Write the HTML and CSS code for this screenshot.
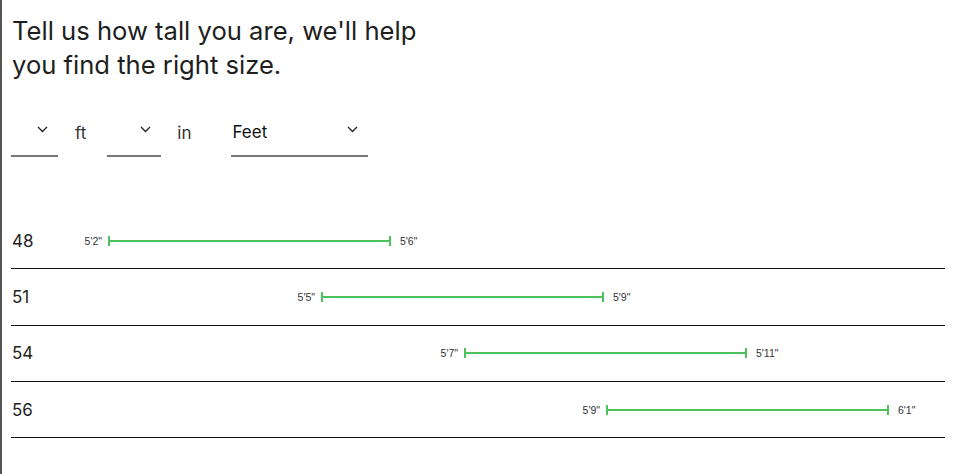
FILE: index.html
```html
<!DOCTYPE html>
<html lang="en">
<head>
    <meta charset="UTF-8">
    <meta name="viewport" content="width=device-width, initial-scale=1.0">
    <title>Size Finder</title>
    <link rel="stylesheet" href="styles.css">
</head>
<body>
    <div class="page">
        <h1 class="title">Tell us how tall you are, we'll help<br>you find the right size.</h1>

        <div class="height-picker">
            <div class="select select-ft">
                <span class="select-value"></span>
                <svg class="chevron" width="11" height="7" viewBox="0 0 11 7"><path d="M1 1l4.5 4.5L10 1" fill="none" stroke="#222" stroke-width="1.3"/></svg>
            </div>
            <span class="unit unit-ft">ft</span>
            <div class="select select-in">
                <span class="select-value"></span>
                <svg class="chevron" width="11" height="7" viewBox="0 0 11 7"><path d="M1 1l4.5 4.5L10 1" fill="none" stroke="#222" stroke-width="1.3"/></svg>
            </div>
            <span class="unit unit-in">in</span>
            <div class="select select-system">
                <span class="select-value">Feet</span>
                <svg class="chevron" width="11" height="7" viewBox="0 0 11 7"><path d="M1 1l4.5 4.5L10 1" fill="none" stroke="#222" stroke-width="1.3"/></svg>
            </div>
        </div>

        <div class="size-chart">
            <div class="size-row">
                <span class="size">48</span>
                <div class="range" style="margin-left: 0px;">
                    <span class="range-lo">5'2"</span>
                    <span class="range-bar"></span>
                    <span class="range-hi">5'6"</span>
                </div>
            </div>
            <div class="size-row">
                <span class="size">51</span>
                <div class="range" style="margin-left: 213px;">
                    <span class="range-lo">5'5"</span>
                    <span class="range-bar"></span>
                    <span class="range-hi">5'9"</span>
                </div>
            </div>
            <div class="size-row">
                <span class="size">54</span>
                <div class="range" style="margin-left: 356px;">
                    <span class="range-lo">5'7"</span>
                    <span class="range-bar"></span>
                    <span class="range-hi">5'11"</span>
                </div>
            </div>
            <div class="size-row">
                <span class="size">56</span>
                <div class="range" style="margin-left: 498px;">
                    <span class="range-lo">5'9"</span>
                    <span class="range-bar"></span>
                    <span class="range-hi">6'1"</span>
                </div>
            </div>
        </div>
    </div>
</body>
</html>
```

FILE: styles.css
```css
html, body {
    margin: 0;
    padding: 0;
    background-color: #fff;
}

body {
    font-family: Inter, "Liberation Sans", Arial, sans-serif;
    color: #222;
}

.page {
    min-height: 474px;
    box-sizing: border-box;
    border-left: 2px solid #555;
    padding: 14px 29px 0 9px;
}

.title {
    margin: 0 0 0 1px;
    font-size: 25.6px;
    font-weight: 400;
    line-height: 34px;
    color: #1e1e1e;
}

.height-picker {
    display: flex;
    align-items: center;
    margin-top: 33px;
}

.select {
    height: 42px;
    box-sizing: border-box;
    display: flex;
    align-items: center;
    justify-content: space-between;
    padding: 0 10px 6px 1px;
    border-bottom: 2px solid #777;
    font-size: 17px;
    color: #111;
}

.select .chevron {
    margin-top: -5px;
}

.select-ft {
    width: 47px;
}

.select-in {
    width: 54px;
}

.select-system {
    width: 137px;
}

.unit {
    font-size: 17px;
    color: #333;
    padding-bottom: 6px;
}

.unit-ft {
    margin: 0 21px 0 17px;
}

.unit-in {
    margin: 0 40px 0 16px;
}

.size-chart {
    margin-top: 56px;
}

.size-row {
    display: flex;
    align-items: center;
    height: 55.33px;
    border-bottom: 1px solid #111;
}

.size {
    width: 51px;
    flex-shrink: 0;
    padding-left: 1px;
    box-sizing: border-box;
    font-size: 17px;
    color: #222;
}

.range {
    display: flex;
    align-items: center;
}

.range-lo,
.range-hi {
    font-family: "Liberation Sans", Arial, sans-serif;
    font-size: 10.5px;
    color: #333;
}

.range-lo {
    width: 40px;
    text-align: right;
    margin-right: 6px;
}

.range-hi {
    margin-left: 9px;
}

.range-bar {
    position: relative;
    width: 283px;
    height: 2px;
    background-color: #4cc15c;
}

.range-bar::before,
.range-bar::after {
    content: "";
    position: absolute;
    top: -4px;
    width: 2px;
    height: 10px;
    background-color: #4cc15c;
}

.range-bar::before {
    left: 0;
}

.range-bar::after {
    right: 0;
}
```
